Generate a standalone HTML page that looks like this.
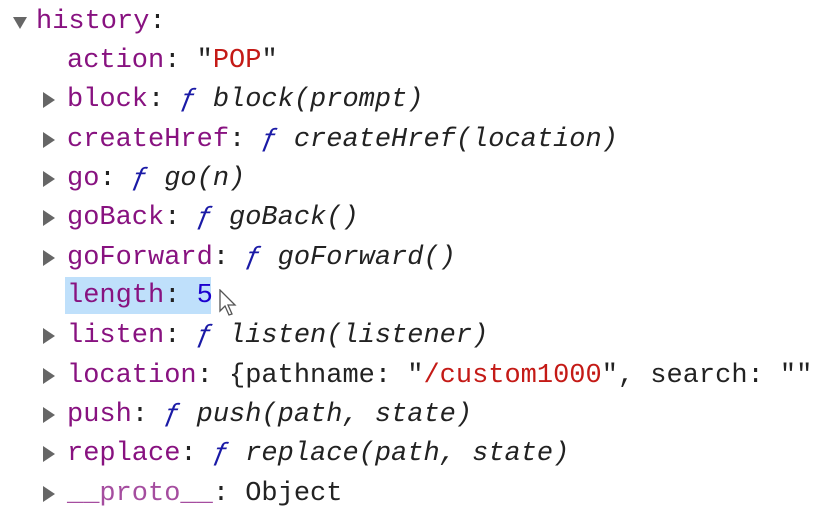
<!DOCTYPE html>
<html><head><style>
body{margin:0;width:818px;height:516px;background:#fff;overflow:hidden;font-family:"Liberation Mono",monospace;font-size:27px;color:#222;}
.l{position:absolute;left:67px;height:39px;line-height:39px;white-space:pre;}
.k{color:#881280}.s{color:#c41a16}.f{color:#1a1aa6;font-style:italic}.i{font-style:italic;color:#222}.n{color:#1c00cf}
.a{position:absolute;left:-24px;top:11px;width:0;height:0;border-top:8px solid transparent;border-bottom:8px solid transparent;border-left:12px solid #666;}
.d{position:absolute;left:13px;top:14px;width:0;height:0;border-left:7px solid transparent;border-right:7px solid transparent;border-top:12px solid #666;}
.hl{background:#bfe0fb}
</style></head><body>
<div class="l" style="left:36px;top:3px"><span class="d" style="left:-23px"></span><span class="k">history</span>:</div>
<div class="l" style="top:42px"><span class="k">action</span>: "<span class="s">POP</span>"</div>
<div class="l" style="top:81px"><span class="a"></span><span class="k">block</span>: <span class="f">ƒ</span> <span class="i">block(prompt)</span></div>
<div class="l" style="top:121px"><span class="a"></span><span class="k">createHref</span>: <span class="f">ƒ</span> <span class="i">createHref(location)</span></div>
<div class="l" style="top:160px"><span class="a"></span><span class="k">go</span>: <span class="f">ƒ</span> <span class="i">go(n)</span></div>
<div class="l" style="top:199px"><span class="a"></span><span class="k">goBack</span>: <span class="f">ƒ</span> <span class="i">goBack()</span></div>
<div class="l" style="top:239px"><span class="a"></span><span class="k">goForward</span>: <span class="f">ƒ</span> <span class="i">goForward()</span></div>
<div class="l hl" style="top:277px;left:65px;padding-left:2px;width:144px;height:37px;line-height:39px"><span class="k">length</span>: <span class="n">5</span></div>
<svg style="position:absolute;left:219px;top:289px" width="20" height="30" viewBox="0 0 20 30"><path d="M1 1 L1 22 L6 17 L10 26 L13 25 L9 16 L16 16 Z" fill="#fff" stroke="#555" stroke-width="1.3"/></svg>
<div class="l" style="top:317px"><span class="a"></span><span class="k">listen</span>: <span class="f">ƒ</span> <span class="i">listen(listener)</span></div>
<div class="l" style="top:357px"><span class="a"></span><span class="k">location</span>: {pathname: "<span class="s">/custom1000</span>", search: ""</div>
<div class="l" style="top:396px"><span class="a"></span><span class="k">push</span>: <span class="f">ƒ</span> <span class="i">push(path, state)</span></div>
<div class="l" style="top:435px"><span class="a"></span><span class="k">replace</span>: <span class="f">ƒ</span> <span class="i">replace(path, state)</span></div>
<div class="l" style="top:475px"><span class="a"></span><span class="k" style="opacity:.75">__proto__</span>: Object</div>
</body></html>
